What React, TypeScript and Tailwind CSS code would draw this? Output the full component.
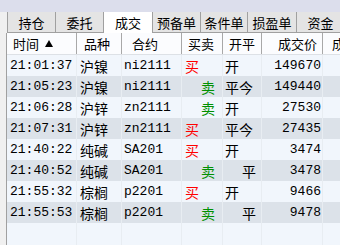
import React from "react";

type Row = {
  t: string;
  v: string;
  c: string;
  buy: boolean;
  kp: string;
  p: string;
};

const rows: Row[] = [
  { t: "21:01:37", v: "沪镍", c: "ni2111", buy: true, kp: "开", p: "149670" },
  { t: "21:05:23", v: "沪镍", c: "ni2111", buy: false, kp: "平今", p: "149440" },
  { t: "21:06:28", v: "沪锌", c: "zn2111", buy: false, kp: "开", p: "27530" },
  { t: "21:07:31", v: "沪锌", c: "zn2111", buy: true, kp: "平今", p: "27435" },
  { t: "21:40:22", v: "纯碱", c: "SA201", buy: true, kp: "开", p: "3474" },
  { t: "21:40:52", v: "纯碱", c: "SA201", buy: false, kp: "平", p: "3478" },
  { t: "21:55:32", v: "棕榈", c: "p2201", buy: true, kp: "开", p: "9466" },
  { t: "21:55:53", v: "棕榈", c: "p2201", buy: false, kp: "平", p: "9478" },
];

const tabs = [
  { label: "持仓", w: "w-[48px]" },
  { label: "委托", w: "w-[48px]" },
  { label: "成交", w: "w-[49px]", active: true },
  { label: "预备单", w: "w-[48px]" },
  { label: "条件单", w: "w-[47px]" },
  { label: "损盈单", w: "w-[49px]" },
  { label: "资金", w: "w-[48px]" },
];

const cjk = { fontFamily: '"Noto Sans CJK SC", "Noto Sans", sans-serif' };
const mono = { fontFamily: '"Liberation Mono", "Noto Sans CJK SC", monospace' };

export default function App() {
  return (
    <div className="w-[340px] h-[245px] overflow-hidden bg-[#f0f0f0] flex flex-col" style={cjk}>
      <div className="h-[12px] shrink-0 bg-[#dcdeec]" />
      <div className="h-[21px] shrink-0 flex pl-[7px] text-[13px] text-black">
        {tabs.map((tb) => (
          <div
            key={tb.label}
            className={
              tb.active
                ? `${tb.w} shrink-0 h-[21px] bg-white border-l border-[#a0a0a0] flex items-center justify-center`
                : `${tb.w} shrink-0 h-[21px] bg-[#e4e4e4] border-l border-b border-[#a0a0a0] flex items-center justify-center`
            }
          >
            <span className="leading-none">{tb.label}</span>
          </div>
        ))}
      </div>
      <div className="flex-1 ml-[6px] border-l border-[#a0a0a0] bg-[#f1f6fc] flex flex-col min-h-0">
        <div className="h-[22px] shrink-0 flex bg-[#fbfcfe] border-b border-[#dde1e6] text-[13px] text-black">
          <div className="w-[70px] shrink-0 border-r border-[#a8a8a8] flex items-center pl-[6px] gap-[6px]">
            <span className="leading-none">时间</span>
            <svg width="8" height="7" viewBox="0 0 8 7">
              <polygon points="4,0 8,7 0,7" fill="#000" />
            </svg>
          </div>
          <div className="w-[45px] shrink-0 border-r border-[#a8a8a8] flex items-center pl-[7px]">
            <span className="leading-none">品种</span>
          </div>
          <div className="w-[60px] shrink-0 border-r border-[#a8a8a8] flex items-center pl-[10px]">
            <span className="leading-none">合约</span>
          </div>
          <div className="w-[41px] shrink-0 border-r border-[#a8a8a8] flex items-center pl-[6px]">
            <span className="leading-none">买卖</span>
          </div>
          <div className="w-[39px] shrink-0 border-r border-[#a8a8a8] flex items-center pl-[6px]">
            <span className="leading-none">开平</span>
          </div>
          <div className="w-[61px] shrink-0 border-r border-[#a8a8a8] flex items-center justify-end pr-[5px]">
            <span className="leading-none">成交价</span>
          </div>
          <div className="flex-1 flex items-center pl-[9px] overflow-hidden whitespace-nowrap">
            <span className="leading-none">成交量</span>
          </div>
        </div>
        {rows.map((r, i) => (
          <div
            key={r.t}
            className={
              i % 2 === 0
                ? "h-[21px] shrink-0 flex bg-[#f1f6fc] text-black"
                : "h-[21px] shrink-0 flex bg-[#dce2e9] text-black"
            }
          >
            <div className="w-[70px] shrink-0 border-r border-[#e8edf2] flex items-center pl-[3px] text-[13px]" style={mono}>
              {r.t}
            </div>
            <div className="w-[45px] shrink-0 border-r border-[#e8edf2] flex items-center pl-[3px] text-[14px]">
              <span className="leading-none">{r.v}</span>
            </div>
            <div className="w-[60px] shrink-0 border-r border-[#e8edf2] flex items-center pl-[2px] text-[13px]" style={mono}>
              {r.c}
            </div>
            <div
              className={
                r.buy
                  ? "w-[41px] shrink-0 border-r border-[#e8edf2] flex items-center pl-[3px] text-[14px] text-[#ff0000]"
                  : "w-[41px] shrink-0 border-r border-[#e8edf2] flex items-center pl-[19px] text-[14px] text-[#009000]"
              }
            >
              <span className="leading-none">{r.buy ? "买" : "卖"}</span>
            </div>
            <div
              className={
                r.kp === "平"
                  ? "w-[39px] shrink-0 border-r border-[#e8edf2] flex items-center pl-[19px] text-[14px]"
                  : "w-[39px] shrink-0 border-r border-[#e8edf2] flex items-center pl-[2px] text-[14px]"
              }
            >
              <span className="leading-none">{r.kp}</span>
            </div>
            <div className="w-[61px] shrink-0 border-r border-[#e8edf2] flex items-center justify-end pr-[1px] text-[13px]" style={mono}>
              {r.p}
            </div>
            <div className="flex-1" />
          </div>
        ))}
        <div className="flex-1 flex bg-[#f1f6fc]">
          <div className="w-[70px] shrink-0 border-r border-[#e8edf2]" />
          <div className="w-[45px] shrink-0 border-r border-[#e8edf2]" />
          <div className="w-[60px] shrink-0 border-r border-[#e8edf2]" />
          <div className="w-[41px] shrink-0 border-r border-[#e8edf2]" />
          <div className="w-[39px] shrink-0 border-r border-[#e8edf2]" />
          <div className="w-[61px] shrink-0 border-r border-[#e8edf2]" />
          <div className="flex-1" />
        </div>
      </div>
    </div>
  );
}
